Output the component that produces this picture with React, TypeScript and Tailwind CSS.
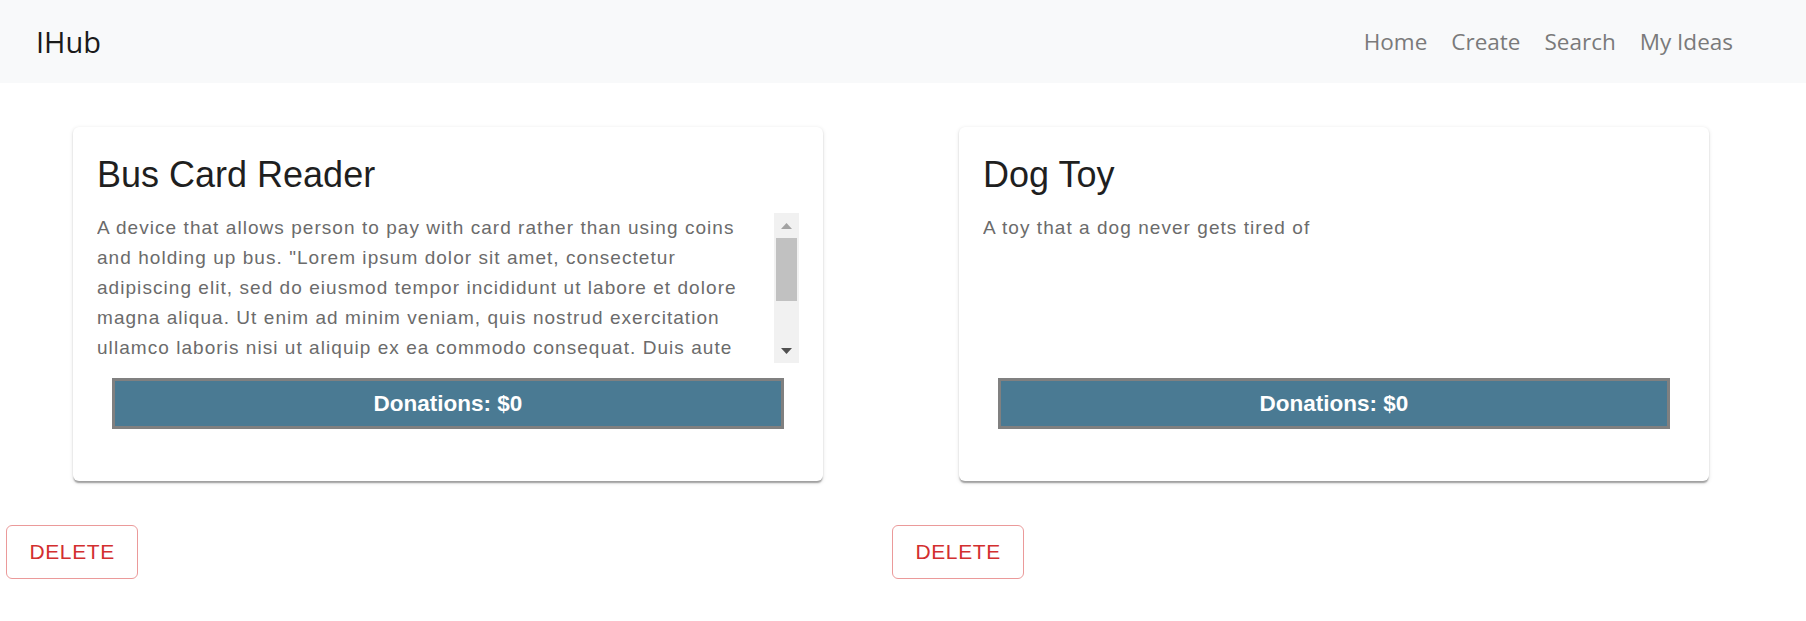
import React from "react";

const bodyText =
  'A device that allows person to pay with card rather than using coins and holding up bus. "Lorem ipsum dolor sit amet, consectetur adipiscing elit, sed do eiusmod tempor incididunt ut labore et dolore magna aliqua. Ut enim ad minim veniam, quis nostrud exercitation ullamco laboris nisi ut aliquip ex ea commodo consequat. Duis aute irure dolor in reprehenderit in voluptate velit esse cillum dolore eu fugiat nulla pariatur. Excepteur sint occaecat cupidatat non proident, sunt in culpa qui officia deserunt mollit anim id est laborum."';

function FakeScrollbar() {
  return (
    <div className="w-[25px] h-full bg-[#f1f1f1] flex flex-col shrink-0">
      <div className="h-[25px] flex items-center justify-center">
        <svg width="11" height="6" viewBox="0 0 11 6">
          <polygon points="0,6 11,6 5.5,0" fill="#a3a3a3" />
        </svg>
      </div>
      <div className="h-[63px] mx-[2px] bg-[#c1c1c1]" />
      <div className="flex-1" />
      <div className="h-[25px] flex items-center justify-center">
        <svg width="11" height="6" viewBox="0 0 11 6">
          <polygon points="0,0 11,0 5.5,6" fill="#505050" />
        </svg>
      </div>
    </div>
  );
}

function IdeaCard({ title, text, scroll }: { title: string; text: string; scroll: boolean }) {
  return (
    <div className="flex flex-col items-start">
      <div className="ml-[67px] w-[750px] bg-white rounded-[6px] shadow-[0_3px_1.5px_-1.5px_rgba(0,0,0,0.2),0_1.5px_1.5px_0_rgba(0,0,0,0.14),0_1.5px_4.5px_0_rgba(0,0,0,0.12)] px-[24px] pt-[24px] pb-[52px] font-['Liberation_Sans',Arial,sans-serif]">
        <h2 className="text-[36px] leading-[48px] text-[#1f1f1f] mb-[14px]">{title}</h2>
        <div className="h-[150px] flex justify-between">
          <div className="w-[660px] overflow-hidden text-[19px] leading-[30px] tracking-[1.05px] text-[#6b6b6b]">
            {text}
          </div>
          {scroll && <FakeScrollbar />}
        </div>
        <div className="mt-[15px] mx-auto w-[672px] h-[51px] border-[3px] border-[#808080] bg-[#4a7a93] flex items-center justify-center text-white font-bold text-[22.5px]">
          Donations: $0
        </div>
      </div>
      <button className="mt-[44px] h-[54px] px-[22.5px] rounded-[6px] border-[1.5px] border-[#eb9a9a] text-[#d32f2f] text-[21px] tracking-[0.6px] font-['Liberation_Sans',Arial,sans-serif] bg-white">
        DELETE
      </button>
    </div>
  );
}

export default function App() {
  return (
    <div className="min-h-screen bg-white">
      <nav className="h-[83px] bg-[#f8f9fa] flex items-center justify-between pl-[36px] pr-[61px] font-['Open_Sans',sans-serif]">
        <span className="text-[29px] text-[#1a1a1a] leading-none">IHub</span>
        <div className="flex items-center text-[22.5px] text-[#7a7a7a]">
          <a className="px-[12px]">Home</a>
          <a className="px-[12px]">Create</a>
          <a className="px-[12px]">Search</a>
          <a className="px-[12px]">My Ideas</a>
        </div>
      </nav>
      <div className="grid grid-cols-[886px_886px] pl-[6px] pt-[44px]">
        <IdeaCard title="Bus Card Reader" text={bodyText} scroll={true} />
        <IdeaCard title="Dog Toy" text="A toy that a dog never gets tired of" scroll={false} />
      </div>
    </div>
  );
}
